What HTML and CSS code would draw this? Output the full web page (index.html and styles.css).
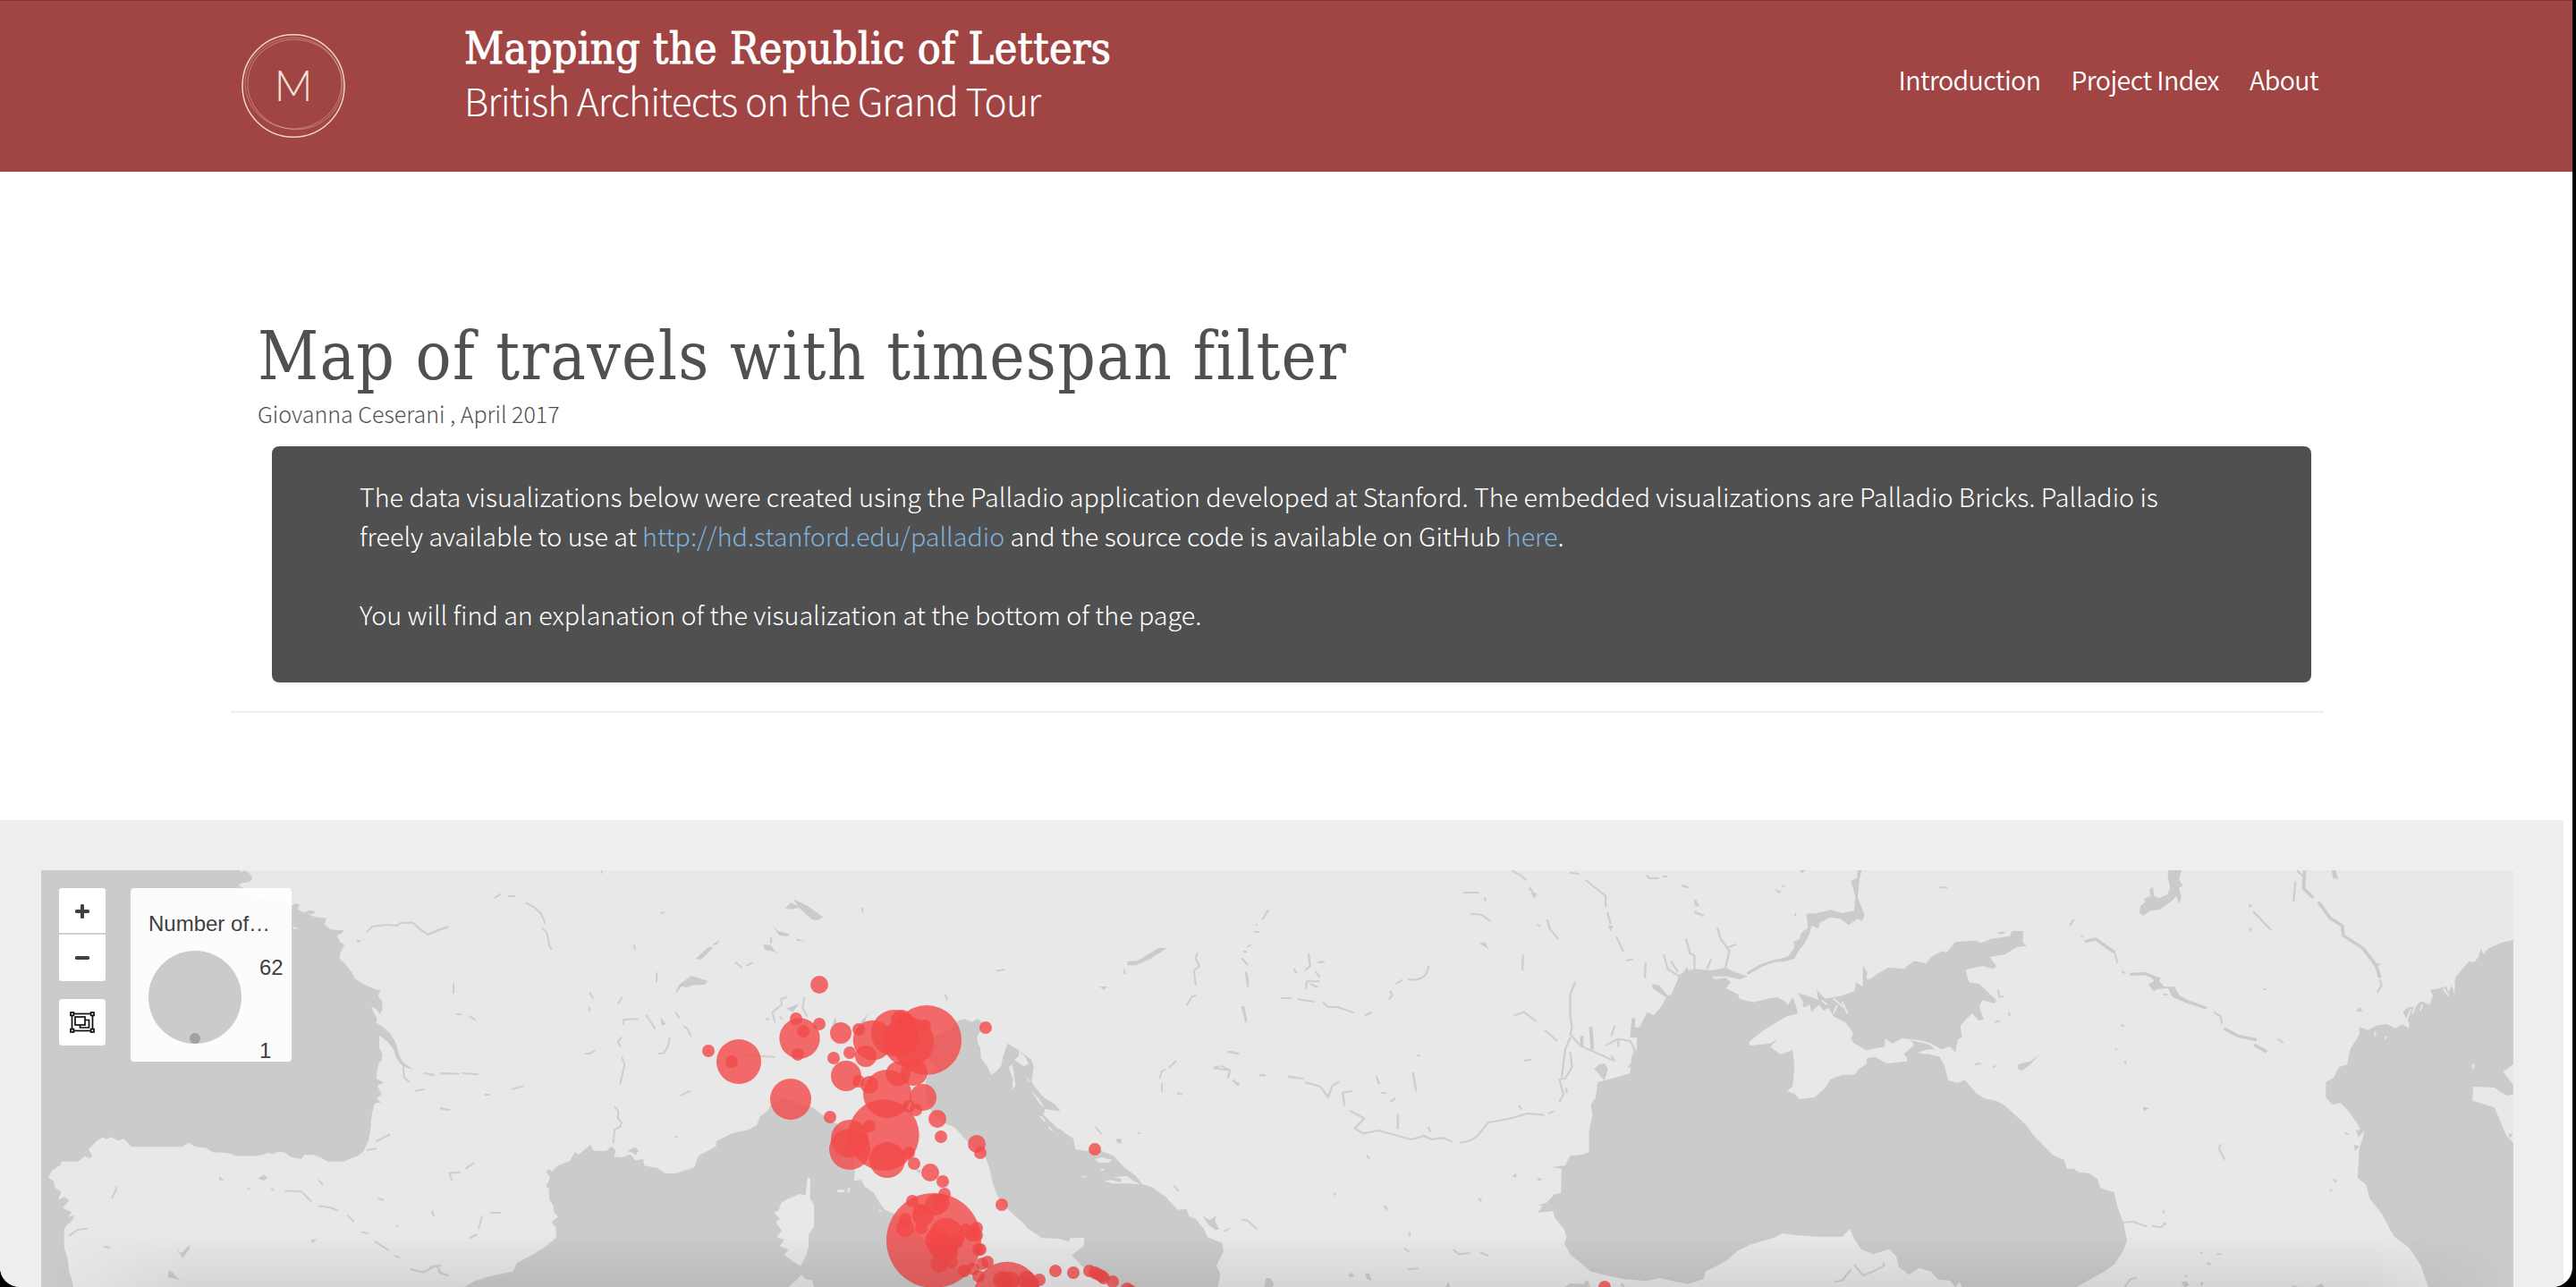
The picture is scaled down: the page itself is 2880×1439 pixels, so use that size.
FILE: index.html
```html
<!DOCTYPE html>
<html lang="en">
<head>
<meta charset="utf-8">
<title>Map of travels with timespan filter</title>
<link rel="stylesheet" href="styles.css">
</head>
<body>
<div class="page">
  <header class="site-header">
    <svg class="logo" viewBox="0 0 120 120" width="120" height="120">
      <ellipse cx="60" cy="60" rx="57" ry="57.3" class="ring"/>
      <ellipse cx="60" cy="57" rx="54" ry="51" class="ring faint"/>
      <ellipse cx="62" cy="58.5" rx="53" ry="50" class="ring faint" transform="rotate(12 62 58)"/>
      <text x="60" y="77" class="logo-letter" text-anchor="middle">M</text>
    </svg>
    <div class="brand">
      <div class="brand-title"><span>Mapping the Republic of Letters</span></div>
      <div class="brand-sub"><span>British Architects on the Grand Tour</span></div>
    </div>
    <nav class="nav"><a>Introduction</a><a>Project Index</a><a>About</a></nav>
  </header>

  <main class="intro">
    <h1><span>Map of travels with timespan filter</span></h1>
    <p class="byline"><span>Giovanna Ceserani , April 2017</span></p>
    <div class="notice">
      <p><span>The data visualizations below were created using the Palladio application developed at Stanford. The embedded visualizations are Palladio Bricks. Palladio is</span><br><span>freely available to use at <a>http://hd.stanford.edu/palladio</a> and the source code is available on GitHub <a>here</a>.</span></p>
      <p><span>You will find an explanation of the visualization at the bottom of the page.</span></p>
    </div>
  </main>

  <section class="viz">
    <div class="map">
      <svg class="basemap" viewBox="46 973 2764 466" width="2764" height="466">
        <!-- Atlantic, Bay of Biscay and Iberia -->
        <g transform="translate(0 900) scale(.33333 .34375)">
          <path class="sea" d="M138 205L797 205 808 218 822 213 836 222 846 236 842 247 828 252 812 254 800 262 815 270 830 285 845 300 860 300 900 308 940 310 975 330 990 320 1005 325 998 340 1020 350 1040 342 1060 348 1045 356 1030 355 1060 365 1095 368 1088 388 1110 405 1140 408 1155 405 1145 418 1130 425 1140 445 1155 455 1148 470 1140 485 1140 500 1160 520 1180 545 1190 565 1215 580 1240 592 1265 602 1277 600 1268 620 1282 640 1283 665 1275 680 1262 665 1245 655 1255 680 1265 695 1262 708 1285 722 1310 745 1328 775 1338 810 1350 835 1370 850 1385 860 1365 855 1345 845 1330 825 1320 795 1300 770 1272 750 1272 790 1283 810 1280 830 1270 840 1265 865 1262 890 1288 903 1265 912 1280 942 1262 955 1278 968 1258 970 1248 1000 1242 1060 1235 1095 1220 1125 1200 1142 1175 1150 1155 1160 1100 1160 1075 1147 1050 1138 1020 1138 1010 1152 995 1148 975 1145 955 1130 935 1127 910 1137 905 1130 880 1138 860 1142 790 1142 770 1133 740 1130 715 1130 690 1115 655 1112 633 1098 610 1112 440 1112 415 1085 398 1092 370 1080 355 1088 345 1080 325 1092 297 1120 310 1142 300 1150 285 1142 262 1160 205 1160 205 1170 175 1188 162 1210 180 1225 185 1245 205 1258 195 1285 215 1275 232 1285 220 1300 210 1310 240 1325 228 1340 250 1335 240 1355 225 1365 215 1380 215 1440 228 1480 232 1520 240 1540 248 1575 138 1575Z"/>
          <path class="sea" d="M865 1215L885 1203 898 1212 885 1222ZM563 1535L567 1513 580 1522 605 1548 590 1542ZM590 1445L608 1458 638 1430 635 1445 612 1475 605 1462ZM1195 440L1212 440 1200 450ZM1040 1415L1062 1413 1050 1425ZM735 1208L752 1222 735 1220ZM830 1245L843 1250 832 1252Z"/>
          <path class="land" d="M975 395L990 398 1002 402 990 404Z"/>
          <path class="river" d="M1230 413L1250 395 1300 390 1330 393 1345 383 1385 383 1410 405 1435 422 1465 408 1500 398M1352 845L1355 885 1373 902M1422 873L1455 877M1478 875L1500 873M1392 930L1425 925M1260 1095L1307 1072M1230 1123L1262 1118M388 1240L390 1250 375 1280M955 1255L1010 1257 1045 1290M1068 1305L1110 1310 1133 1320M1165 1335L1187 1355M1213 1388L1235 1395M1258 1420L1305 1450M1322 1465L1340 1472M230 1402L260 1382 293 1378M348 1437L370 1440M1375 1510L1420 1520 1465 1498 1480 1525 1500 1528M1268 1280L1288 1286M1450 1320L1455 1337M1068 1220L1083 1235M1328 1372L1338 1368M1478 985L1492 990M910 1247L918 1255"/>
        </g>
        <!-- France, Gulf of Lion and Tyrrhenian Sea -->
        <g transform="translate(480 960) scale(.33333)">
          <path class="sea" d="M118 1437L150 1418 200 1402 280 1385 295 1355 340 1332 385 1305 425 1272 425 1240 410 1218 432 1202 418 1185 415 1162 403 1145 400 1105 392 1100 405 1070 392 1050 400 1042 412 1050 430 1030 470 1015 488 985 502 992 540 960 552 980 595 980 610 965 625 978 620 1000 645 1003 675 992 690 1012 718 1008 720 1030 765 1038 790 1055 825 1057 890 1035 895 1015 905 995 935 980 962 965 962 948 1015 922 1070 910 1098 895 1110 865 1135 845 1145 825 1190 803 1235 820 1285 835 1320 860 1345 880 1370 890 1400 930 1420 990 1428 1040 1425 1080 1450 1078 1460 1100 1490 1120 1510 1155 1530 1180 1560 1192 1610 1230 1660 1280 1710 1330 1770 1370 1810 1390 1840 1440Z"/>
          <path class="land" d="M1268 1070L1278 1072 1277 1140 1290 1160 1290 1235 1273 1260 1272 1305 1262 1335 1245 1367 1225 1355 1190 1330 1205 1312 1175 1300 1190 1278 1165 1270 1182 1248 1162 1220 1175 1208 1157 1187 1172 1180 1180 1155 1200 1143 1240 1125 1262 1130ZM1200 1440L1230 1415 1248 1395 1262 1410 1285 1415 1290 1440ZM1366 1116L1375 1109 1394 1112 1392 1119 1370 1119ZM1405 1102L1411 1106 1409 1122 1402 1118ZM1505 1180L1520 1180 1512 1186Z"/>
          <path class="sea" d="M1193 168L1212 148 1235 158 1220 135 1270 160 1320 195 1303 207 1283 205 1240 165 1210 170ZM893 337L935 297 953 298 912 338ZM945 290L975 273 965 288ZM822 457L840 420 880 393 933 410 925 422 880 425 862 433 847 428ZM1120 288L1145 290 1168 320 1155 312 1125 307ZM1150 225L1170 243 1210 254 1200 261 1175 258ZM665 980L690 968 702 980 690 995 685 988ZM775 532L795 555 780 560ZM1230 268L1260 276 1235 277ZM1197 503L1240 487 1220 515ZM1352 555L1362 530 1368 560ZM1430 570L1472 518 1440 600Z"/>
          <path class="river" d="M218 132L240 119M263 126L288 126M323 148Q380 172 387 217M378 232L395 250 402 290 410 306M0 253L65 227M81 418L81 453M686 287L690 307M763 382L762 415M537 447L550 470M537 497L537 513M647 465L632 488M650 557L652 540 700 538M727 525L758 572M825 515L838 535M853 562L865 570 878 597M806 600Q805 630 785 653L768 654M645 598L632 615 642 632M645 665L655 690 640 758M523 654L540 653 557 642M0 725L18 725M38 720L100 722M110 720L165 724M277 774L317 762M186 792L204 792M36 838L70 844M620 832L633 845 633 872 645 885 640 900 622 908 617 955M150 1020L122 1040M105 1052L68 1055 75 1080M204 1188L240 1188M177 1198L165 1243M160 1260L135 1273M8 1182L15 1200M0 1370L40 1365M30 1385L65 1400M133 527L155 542M90 522L108 522M842 795L875 779M1025 347L1050 366M1063 360L1085 348M1147 263L1145 285M1060 660L1160 665M1453 165L1453 182M775 183L788 180M578 40L578 50M1258 465L1252 500 1268 530M1200 465L1180 470 1182 490 1150 515 1160 550M1175 530L1185 540M1127 537L1140 540M824 935L834 933"/>
        </g>
        <!-- Adriatic and Dalmatia -->
        <g transform="translate(950 1060) scale(.33333)">
          <path class="sea" d="M360 245L385 238 410 248 430 237 445 250 440 275 428 295 428 315 438 335 440 370 460 395 475 425 490 415 508 395 515 360 530 320 570 345 610 375 617 400 610 450 625 470 650 500 690 525 707 548 690 545 655 540 650 560 690 595 715 615 750 640 757 675 800 682 830 675 885 697 920 735 960 765 982 793 1010 800 1060 835 1100 878 1130 875 1138 900 1160 908 1190 945 1200 970 1250 990 1253 1020 1230 1065 1243 1095 1235 1140 900 1140 860 1100 780 1068 745 1030 785 1000 787 972 740 973 735 985 700 975 645 972 595 940 580 920 545 890 520 865 495 830 480 790 470 745 455 700 430 675 400 655 350 600 310 585 275 550 255 500 255 450 260 430 290 400 240 340 250 310 300 290 345 270Z"/>
          <path class="land" d="M533 400L545 390 552 430 556 462 545 475 548 440ZM552 375L567 362 568 345 585 360 600 388 585 397 570 388ZM822 708L845 702 880 710 870 720 835 720ZM855 782L870 778 910 785 912 775 885 768 930 765 950 780 975 793 935 790 880 790ZM775 768L795 762 785 770ZM838 740L858 740 848 747ZM588 430L605 445 603 450ZM610 480L635 505 652 535 635 520Z"/>
          <path class="landline" d="M650 555L700 605M640 565L655 580M668 600L680 615"/>
          <path class="sea" d="M930 58L932 45 965 43 1035 0 1065 0 1010 35 960 58ZM1183 898L1195 905 1210 912 1230 897 1225 915 1240 945 1225 945 1200 925ZM838 130L865 129 852 141ZM893 640L912 640 911 656 897 653ZM1392 1140L1395 1110 1405 1108 1422 1125 1418 1140ZM215 740L240 745 235 757ZM965 617L978 622 968 625Z"/>
          <path class="river" d="M920 70L922 87M1167 15L1160 35 1173 60 1155 75 1160 125M1163 160L1148 162 1130 193M1316 35L1335 57M1328 83L1335 95 1335 128M1315 195L1323 225M1328 232L1328 248M1095 378L1070 403M1060 408L1047 412 1040 438M1047 453L1047 483M1267 348L1285 348 1305 355M1220 400L1240 398M1245 395L1275 410 1268 438M1285 445L1308 457M1375 425L1395 428M1470 430L1500 435M1447 168L1480 168M1098 487L1115 492M823 598L845 625M1088 797L1102 815M1255 950L1275 940M1315 910L1335 915 1365 942M492 77L520 72M320 155L327 175M1320 12L1332 12M1490 70L1500 85"/>
        </g>
        <!-- Carpathian basin and the Danube -->
        <g transform="translate(1350 960) scale(.38265 .33333)">
          <path class="river" d="M178 172L160 205M143 218L143 224M135 246L152 246M128 288L115 297M100 335L118 357M112 380L118 430M105 495L113 548M58 648L92 655M18 703L65 710 60 738M75 742L90 762M152 727L170 727M237 733L280 738M285 750L330 765 352 800 365 762 385 748M422 780L395 785 400 830M415 845L458 872 430 905 455 922 500 912 595 942 632 930 655 942 690 937 715 950M737 953Q770 950 790 928L820 885 880 873 935 855 985 860M997 855L1012 847M556 855L556 908M493 730L502 757M600 717L610 782M507 786L522 786M548 803L535 817M645 900L652 917M215 468L245 468M262 472L312 480M337 482L350 497 380 498 428 517M460 527L480 515M530 473L540 458 533 443M550 420L570 407M585 405Q640 415 646 360M748 114L793 114M768 185L800 188 828 211M810 130L812 143M890 40L920 60 930 73M940 97L955 120M992 203L1000 235 1025 270M963 222L973 228M922 322L920 375M1075 413L1060 455 1060 530 1065 565 1060 590 1090 628 1185 677M895 527L925 515 960 545M985 575L1022 612M1060 600L1045 640 1035 735M1060 650L1065 700 1045 738 1028 740 1040 790 1028 817M1048 770L1050 787M925 677L945 674M910 828L918 842M1057 47L1085 50M1105 72L1130 95 1163 125 1163 163M1168 180L1178 220M1195 262L1215 312M1223 343L1243 337M1280 347L1278 400M1283 55L1290 66 1320 66M1330 60L1343 60M1388 90L1405 97M1425 138L1427 160M1423 180L1450 192M295 317L300 360 285 375M322 348L342 346M315 378L328 397M288 438L290 412 328 412M300 420L322 432M252 370L260 383M575 1307L590 1320M718 1312L735 1327 767 1323M797 1320L820 1332M585 1378L615 1375M613 658L620 665M1163 627L1200 605 1235 612 1248 640 1245 680 1230 700M1190 560L1180 595M1200 610L1200 632M1180 660L1190 680M590 1252L590 1265M465 995L473 1007"/>
          <path class="sea" d="M795 285L810 280 822 305 810 295ZM512 1162L527 1170 525 1185ZM460 1390L472 1392 480 1415 465 1410ZM165 1440L172 1408 182 1407 193 1422 190 1440ZM890 1065L902 1055 902 1070ZM962 1072L980 1073 968 1082ZM1145 690L1160 687 1170 705 1160 745 1130 705ZM1040 1440L1060 1425 1100 1427 1105 1415 1120 1440ZM410 1398L420 1388 430 1400 420 1405ZM695 1440L703 1418 710 1440ZM1170 225L1185 225 1178 245ZM945 115L962 118 955 135ZM367 1120L376 1122 374 1135ZM788 1137L803 1143 798 1152ZM1205 1432L1213 1422 1220 1440Z"/>
        </g>
        <!-- Black Sea and Sea of Azov -->
        <g transform="translate(1700 960) scale(.38265 .33333)">
          <path class="sea" d="M460 392L475 382 488 362 490 375 510 370 560 375 600 365 620 378 665 395 640 405 600 395 560 395 565 405 600 400 615 415 600 435 635 455 640 470 680 482 720 470 750 465 775 480 780 492 795 465 805 495 810 520 775 530 740 555 710 575 668 615 670 627 730 620 752 603 730 632 760 657 795 642 800 700 795 765 778 780 800 788 815 807 860 800 890 770 905 740 940 725 975 725 990 705 1010 690 1012 670 1035 665 1070 687 1130 680 1130 655 1150 660 1190 655 1225 665 1237 690 1250 745 1280 752 1298 742 1330 785 1355 805 1390 812 1415 828 1440 855 1475 890 1500 930 1530 965 1556 995 1588 1010 1596 1040 1616 1040 1631 1052 1661 1055 1686 1075 1694 1105 1734 1120 1746 1175 1761 1220 1772 1280 1761 1315 1736 1360 1706 1385 1666 1410 1621 1440 1290 1440 1283 1420 1270 1437 1255 1415 1220 1412 1200 1385 1165 1373 1135 1395 1105 1370 1098 1335 1078 1310 1030 1327 995 1310 975 1275 962 1242 940 1268 870 1268 800 1262 765 1257 740 1272 670 1295 635 1315 600 1350 540 1385 535 1410 490 1427 450 1418 405 1407 370 1417 300 1410 260 1400 205 1385 180 1360 145 1328 128 1290 135 1270 125 1240 100 1205 95 1182 50 1188 65 1165 50 1163 75 1155 100 1125 118 1122 120 1040 90 1035 130 1030 145 997 180 993 200 985 200 915 210 860 205 825 220 800 225 750 260 740 320 720 325 660 340 640 340 600 320 600 325 535 335 535 335 568 348 565 370 515 390 525 415 490 425 465 385 435 385 420 405 425 430 460 440 455 460 405Z"/>
          <path class="sea" d="M1020 405L1045 385 1075 365 1120 370 1150 343 1185 352 1200 330 1230 310 1245 315 1270 280 1330 275 1345 283 1380 268 1430 260 1435 243 1468 243 1468 280 1478 293 1450 297 1415 322 1370 330 1390 360 1380 370 1350 360 1300 373 1310 415 1340 420 1390 475 1385 487 1350 475 1340 495 1350 530 1340 545 1320 520 1305 535 1285 560 1290 600 1278 605 1270 650 1255 630 1230 640 1200 620 1170 610 1115 603 1085 620 1065 603 1065 630 1010 643 975 620 965 605 972 585 950 550 915 530 900 500 885 510 872 490 850 515 845 490 825 500 825 480 810 450 850 465 870 475 865 440 890 470 940 460 975 445 980 415 1000 430 1000 360 1013 380 1010 402ZM1140 610L1150 625 1120 655 1135 680 1225 668 1160 650 1190 640 1210 640 1195 625 1175 618ZM1392 252L1405 243 1418 248 1408 253ZM1455 690L1490 680 1515 658 1505 672 1490 690 1465 712 1453 705Z"/>
          <path class="landline" d="M915 470L945 500M925 490L915 520M940 480L955 520M880 475L895 490"/>
          <path class="sea" d="M985 35L998 35 990 70 985 130 1005 190 998 210 985 202 958 223 935 202 905 197 875 215 870 235 850 225 845 250 830 285 812 310 800 335 775 345 740 347 700 365 665 390 660 382 700 355 740 340 780 330 800 300 798 280 815 270 820 250 840 232 835 185 865 183 905 172 940 183 975 175 978 125 965 75 983 65ZM815 38L832 38 822 50ZM742 103L762 110 755 117Z"/>
          <path class="river" d="M418 322L430 370 460 392M440 345L460 380M483 268L495 318 508 325 508 375M545 370L557 337M575 232L585 270 610 310 598 370M605 298L630 288M763 95L772 90M470 90L490 97M510 138L520 160M508 178L535 192M1222 97L1247 97M1395 440L1400 465 1412 462M1385 548L1400 546M1428 515L1428 528M1328 690L1345 687M1380 700L1388 695M918 1420L940 1415 965 1378M975 1362L1000 1398 1030 1385 1062 1365 1062 1355M195 1415L200 1440M803 183L803 193"/>
          <path class="rivermed" d="M205 565L210 640M180 595L178 630M1320 500L1350 540"/>
        </g>
        <!-- Caucasus, lower Volga and the Caspian Sea -->
        <g transform="translate(2280 960) scale(.38265 .33333)">
          <path class="sea" d="M1390 272L1350 282 1310 302 1298 320 1290 303 1283 330 1270 348 1255 345 1240 365 1215 400 1213 455 1205 425 1195 450 1190 430 1175 432 1162 438 1142 440 1150 460 1140 490 1115 478 1100 495 1075 500 1062 515 1080 550 1080 570 1060 555 1040 570 1015 555 985 560 960 575 935 565 935 590 908 640 900 690 875 700 860 735 837 750 837 800 855 825 880 820 905 850 930 890 940 915 950 910 945 940 935 970 930 1070 955 1095 965 1140 1000 1190 1035 1265 1080 1305 1115 1365 1137 1440 1390 1440 1390 960 1365 930 1350 890 1330 835 1265 812 1268 765 1330 768 1350 785 1370 795 1385 790 1385 760 1355 715 1390 685Z"/>
          <path class="land" d="M1265 688L1271 688 1271 705 1265 705ZM1008 597L1015 597 1012 610ZM980 575L985 590 978 598Z"/>
          <path class="landline" d="M1085 505L1072 545M1100 490L1090 520M1120 490L1112 510M1180 435L1195 460"/>
          <path class="sea" d="M378 35L417 35 408 70 420 90 408 98 415 132 408 152 400 125 388 142 350 172 325 175 303 192 293 182 295 160 310 145 305 135 325 125 322 105 332 95 335 125 350 133 375 120 382 95 375 62ZM318 422L335 410 322 390 355 400 350 410 365 430 395 430 410 460 435 475 440 490 390 465 375 435 345 438 335 445ZM853 38L865 38 873 68 858 65ZM925 510L937 497 945 515ZM920 960L935 965 922 980ZM925 910L950 912 932 935ZM1370 922L1383 924 1376 938ZM303 832L322 838 305 848ZM415 1420L430 1418 438 1430 425 1440ZM738 1432L755 1435 738 1440ZM800 1440L825 1425 835 1440ZM855 1072L870 1080 866 1088ZM247 678L255 678 252 692ZM612 153L622 155 614 168ZM612 232L622 235 614 247ZM490 1355L500 1355 500 1363 490 1363ZM470 1420L480 1422 474 1437ZM893 917L908 923 895 927Z"/>
          <path class="rivermed" d="M775 40L772 100 800 132M815 145L850 200 885 225 888 258 945 300 985 360 995 400M133 278L165 270 220 315M265 388L310 386 340 400M435 480L488 502M540 570L580 595 635 608M628 625L665 648"/>
          <path class="river" d="M752 40L772 60M748 78L743 145M625 177L677 240M220 315L228 350M240 378L252 385M510 515L530 530 533 555M90 225L100 203M122 258L128 263M995 405L1000 425 987 450M975 355L997 355M698 605L713 618M238 558L248 562M222 637L228 640M655 438L663 438M530 958L525 975 542 1010M245 1220L275 1218 315 1235M330 1232L355 1237 370 1222M363 1180L363 1190M250 1437L265 1412 285 1405M470 1322L478 1322M518 1327L533 1327M848 1110L855 1115M425 1397L430 1403M362 456L375 456"/>
        </g>
        <!-- Travel destinations, sized by number of visits -->
        <g class="points" transform="translate(750 1060) scale(.33333)">
          <circle cx="498" cy="123" r="30"/><circle cx="420" cy="237" r="21"/><circle cx="498" cy="255" r="21"/><circle cx="432" cy="303" r="68"/><circle cx="444" cy="279" r="21"/><circle cx="426" cy="357" r="21"/><circle cx="126" cy="345" r="21"/><circle cx="228" cy="381" r="75"/><circle cx="204" cy="381" r="21"/><circle cx="402" cy="507" r="69"/><circle cx="570" cy="285" r="36"/><circle cx="630" cy="273" r="21"/><circle cx="678" cy="309" r="67"/><circle cx="600" cy="351" r="21"/><circle cx="546" cy="369" r="21"/><circle cx="654" cy="363" r="36"/><circle cx="588" cy="429" r="51"/><circle cx="630" cy="447" r="21"/><circle cx="666" cy="459" r="30"/><circle cx="750" cy="285" r="78"/><circle cx="774" cy="243" r="36"/><circle cx="786" cy="246" r="30"/><circle cx="858" cy="309" r="117"/><circle cx="798" cy="315" r="84"/><circle cx="771" cy="303" r="60"/><circle cx="852" cy="261" r="21"/><circle cx="762" cy="422" r="41"/><circle cx="816" cy="417" r="45"/><circle cx="726" cy="489" r="81"/><circle cx="714" cy="627" r="119"/><circle cx="846" cy="501" r="45"/><circle cx="798" cy="531" r="21"/><circle cx="822" cy="543" r="21"/><circle cx="894" cy="573" r="30"/><circle cx="906" cy="633" r="21"/><circle cx="1026" cy="657" r="30"/><circle cx="1038" cy="687" r="21"/><circle cx="1056" cy="267" r="21"/><circle cx="534" cy="567" r="21"/><circle cx="600" cy="639" r="63"/><circle cx="600" cy="675" r="69"/><circle cx="666" cy="597" r="21"/><circle cx="726" cy="711" r="60"/><circle cx="798" cy="687" r="21"/><circle cx="816" cy="723" r="21"/><circle cx="870" cy="753" r="30"/><circle cx="912" cy="783" r="21"/><circle cx="918" cy="825" r="21"/><circle cx="810" cy="849" r="21"/><circle cx="1110" cy="861" r="21"/><circle cx="882" cy="981" r="159"/><circle cx="888" cy="861" r="36"/><circle cx="906" cy="855" r="30"/><circle cx="834" cy="879" r="21"/><circle cx="846" cy="897" r="36"/><circle cx="786" cy="909" r="21"/><circle cx="786" cy="939" r="30"/><circle cx="840" cy="939" r="21"/><circle cx="924" cy="963" r="57"/><circle cx="894" cy="981" r="41"/><circle cx="900" cy="1005" r="36"/><circle cx="918" cy="1005" r="45"/><circle cx="942" cy="1023" r="21"/><circle cx="960" cy="987" r="21"/><circle cx="966" cy="969" r="21"/><circle cx="990" cy="945" r="21"/><circle cx="1026" cy="939" r="21"/><circle cx="1008" cy="963" r="21"/><circle cx="1014" cy="951" r="21"/><circle cx="1026" cy="963" r="21"/><circle cx="1032" cy="1011" r="21"/><circle cx="1038" cy="1011" r="21"/><circle cx="942" cy="1053" r="21"/><circle cx="900" cy="1059" r="30"/><circle cx="984" cy="1083" r="21"/><circle cx="1014" cy="1077" r="21"/><circle cx="1044" cy="1059" r="21"/><circle cx="1062" cy="1053" r="21"/><circle cx="1032" cy="1101" r="21"/><circle cx="1128" cy="1163" r="111"/><circle cx="1110" cy="1113" r="30"/><circle cx="1122" cy="1115" r="30"/><circle cx="1140" cy="1115" r="30"/><circle cx="1194" cy="1113" r="30"/><circle cx="1206" cy="1128" r="30"/><circle cx="1236" cy="1113" r="21"/><circle cx="1290" cy="1083" r="21"/><circle cx="1350" cy="1089" r="21"/><circle cx="1404" cy="1083" r="21"/><circle cx="1422" cy="1089" r="21"/><circle cx="1434" cy="1095" r="21"/><circle cx="1446" cy="1101" r="21"/><circle cx="1452" cy="1107" r="21"/><circle cx="1482" cy="1119" r="21"/><circle cx="1530" cy="1143" r="21"/><circle cx="1542" cy="1150" r="21"/><circle cx="1422" cy="675" r="21"/><circle cx="3132" cy="1137" r="21"/>
        </g>
      </svg>
      <div class="controls">
        <div class="zoom-box">
          <button class="ctl"><svg viewBox="0 0 16 16" width="16" height="16"><path d="M1.8 8H14.2M8 1.8V14.2"/></svg></button>
          <button class="ctl"><svg viewBox="0 0 16 16" width="16" height="16"><path d="M1.8 8H14.2"/></svg></button>
        </div>
        <button class="ctl fit">
          <svg class="group-icon" viewBox="0 0 28 24" width="28" height="24">
            <rect x="2.5" y="2.5" width="23" height="19"/>
            <path d="M17 9.5H21.5V18H11.500V15"/>
            <rect x="6" y="6" width="11" height="9"/>
            <rect class="handle" x="1" y="1" width="3.4" height="3.4"/><rect class="handle" x="23.6" y="1" width="3.4" height="3.4"/>
            <rect class="handle" x="1" y="19.6" width="3.4" height="3.4"/><rect class="handle" x="23.6" y="19.6" width="3.4" height="3.4"/>
          </svg>
        </button>
      </div>
      <div class="legend">
        <div class="legend-title">Number of…</div>
        <div class="legend-body">
          <svg viewBox="0 0 104 104" width="104" height="104"><circle cx="52" cy="52" r="52" fill="#cbcbcb"/><circle cx="52" cy="98" r="6" fill="#a2a2a2"/></svg>
          <div class="legend-scale"><span>62</span><span>1</span></div>
        </div>
      </div>
      <div class="shade"></div>
    </div>
  </section>
</div>
</body>
</html>
```
FILE: styles.css
```css
* { box-sizing: border-box; }
body { margin: 0; width: 2880px; height: 1439px; overflow: hidden; background: #000; color: #505050; font-family: "Noto Sans CJK SC", "Noto Sans", sans-serif; font-weight: 300; }
p, h1 { margin: 0; }
span, .nav a { white-space: nowrap; }
.page { width: 2876px; height: 1439px; overflow: hidden; background: #fff; border-radius: 0 0 22px 22px; }

.site-header { display: flex; height: 192px; padding-left: 268px; padding-right: 284px; background: #a14444; border-top: 1px solid #7d3436; color: #fff; }
.logo { margin-top: 35px; flex: none; }
.ring { fill: none; stroke: #f0d5c8; stroke-width: 1.5; }
.faint { stroke-width: 1; opacity: .4; }
.logo-letter { font: 300 47px Lato, sans-serif; fill: #f5e2d8; }
.brand { margin-left: 131px; padding-top: 23px; }
.brand-title { font: 400 48px/60px "DejaVu Serif Condensed", "DejaVu Serif", serif; height: 58px; letter-spacing: .36px; -webkit-text-stroke: 1px #fff; }
.brand-sub { font-size: 42.400px; line-height: 60px; letter-spacing: -.85px; }
.nav { display: flex; gap: 34px; margin-left: auto; font-size: 28.600px; letter-spacing: -.55px; line-height: 44px; padding-top: 66px; font-weight: 350; }

.intro { margin: 160px 278px 0 258px; height: 445px; border-bottom: 2px solid #eee; padding: 2px 0 0 30px; }
.intro h1 { font: 400 74px/88px "DejaVu Serif Condensed", "DejaVu Serif", serif; letter-spacing: 1.25px; }
.byline { font-size: 25px; line-height: 40px; height: 57px; }
.notice { width: 2280px; height: 264px; margin-left: 16px; padding: 34px 0 0 98px; border-radius: 8px; background: #505050; color: #fff; font-size: 28.690px; line-height: 44px; box-shadow: 0 2px 2px rgba(0,0,0,.05); }
.notice p { margin-bottom: 44px; }
.notice a { color: #7fb0dc; }

.viz { width: 2866px; height: 522px; margin-top: 120px; background: #eee; padding: 56px 56px 0 46px; }
.map { position: relative; width: 2764px; height: 466px; background: #e8e8e8; overflow: hidden; }
.basemap { display: block; }
.sea { fill: #cbcbcb; }
.land { fill: #e8e8e8; }
.landline { fill: none; stroke: #e8e8e8; stroke-width: 5; }
.river { fill: none; stroke: #cecece; stroke-width: 6; stroke-linejoin: round; }
.rivermed { fill: none; stroke: #cbcbcb; stroke-width: 10; stroke-linejoin: round; }
.points { fill: #f34848; fill-opacity: .8; }
.controls { position: absolute; left: 20px; top: 20px; display: flex; flex-direction: column; gap: 20px; }
.zoom-box { border-radius: 4px; overflow: hidden; background: #fff; }
.ctl { display: flex; align-items: center; justify-content: center; width: 52px; height: 52px; padding: 0; border: 0; background: #fff; }
.zoom-box .ctl:first-child { border-bottom: 2px solid #d2d2d2; padding-top: 2px; }
.ctl path { fill: none; stroke: #404040; stroke-width: 4; stroke-linecap: round; }
.fit { border-radius: 4px; }
.group-icon rect, .ctl .group-icon path { fill: none; stroke: #111; stroke-width: 1.7; stroke-linecap: butt; }
.group-icon .handle { fill: #fff; }
.legend { position: absolute; left: 100px; top: 20px; width: 180px; height: 194px; padding: 24px 0 0 20px; border-radius: 4px; background: rgba(255,255,255,.93); color: #404040; font: 24px/32px "Liberation Sans", sans-serif; overflow: hidden; }
.legend-body { display: flex; gap: 20px; margin-top: 14px; }
.legend-scale { display: flex; flex-direction: column; justify-content: space-between; height: 128px; padding-top: 3px; }
.shade { position: absolute; inset: auto 0 0 0; height: 60px; background: linear-gradient(rgba(0,0,0,0), rgba(0,0,0,.08)); -webkit-mask-image: linear-gradient(90deg, transparent, #000 6%, #000 94%, transparent); mask-image: linear-gradient(90deg, transparent, #000 6%, #000 94%, transparent); }
```
